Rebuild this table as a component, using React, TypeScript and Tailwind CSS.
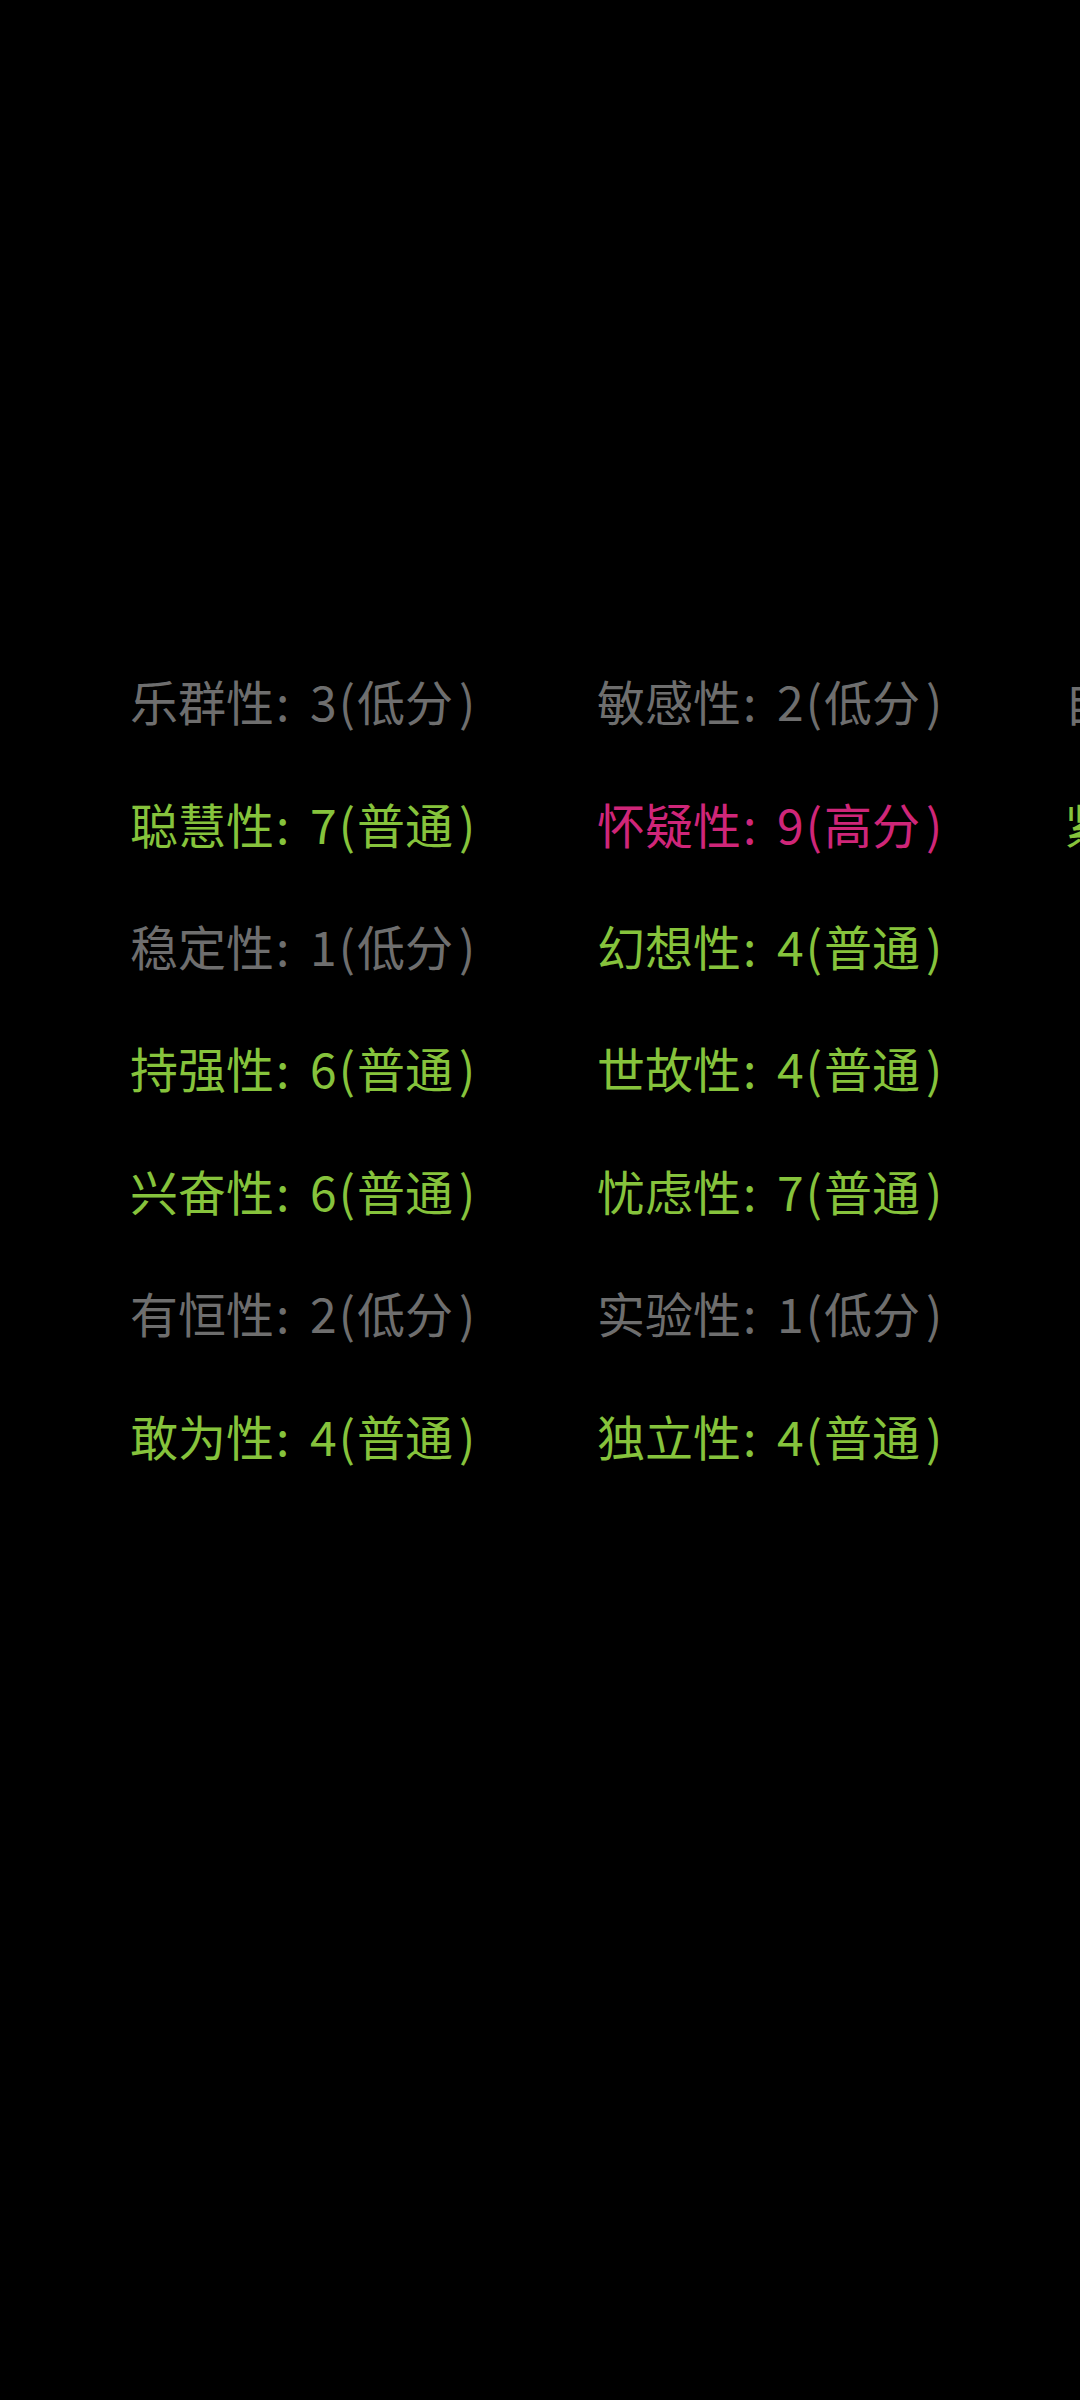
import React from "react";

type Item = { name: string; score: number; level: "低分" | "普通" | "高分" };

const columns: Item[][] = [
  [
    { name: "乐群性", score: 3, level: "低分" },
    { name: "聪慧性", score: 7, level: "普通" },
    { name: "稳定性", score: 1, level: "低分" },
    { name: "持强性", score: 6, level: "普通" },
    { name: "兴奋性", score: 6, level: "普通" },
    { name: "有恒性", score: 2, level: "低分" },
    { name: "敢为性", score: 4, level: "普通" },
  ],
  [
    { name: "敏感性", score: 2, level: "低分" },
    { name: "怀疑性", score: 9, level: "高分" },
    { name: "幻想性", score: 4, level: "普通" },
    { name: "世故性", score: 4, level: "普通" },
    { name: "忧虑性", score: 7, level: "普通" },
    { name: "实验性", score: 1, level: "低分" },
    { name: "独立性", score: 4, level: "普通" },
  ],
  [
    { name: "自律性", score: 3, level: "低分" },
    { name: "紧张性", score: 5, level: "普通" },
  ],
];

function colorFor(level: Item["level"]) {
  if (level === "低分") return "text-[#6e6e6e]";
  if (level === "高分") return "text-[#cf2679]";
  return "text-[#86c33c]";
}

export default function App() {
  return (
    <div
      className="w-[1080px] h-[2400px] bg-black overflow-hidden"
      style={{ fontFamily: '"Noto Sans CJK SC", "Noto Sans", sans-serif' }}
    >
      <div className="flex pt-[639px] pl-[130px]">
        {columns.map((col, ci) => (
          <div key={ci} className="flex flex-col w-[467px] shrink-0">
            {col.map((it) => (
              <div
                key={it.name}
                className={`h-[122.4px] flex items-center text-[48px] whitespace-nowrap ${colorFor(it.level)}`}
              >
                <span>{it.name}</span>
                <span className="inline-block w-[36px] pl-[2px]">:</span>
                <span>{it.score}</span>
                <span className="ml-[2px] mr-[2px]">(</span>
                <span>{it.level}</span>
                <span className="ml-[6px]">)</span>
              </div>
            ))}
          </div>
        ))}
      </div>
    </div>
  );
}
